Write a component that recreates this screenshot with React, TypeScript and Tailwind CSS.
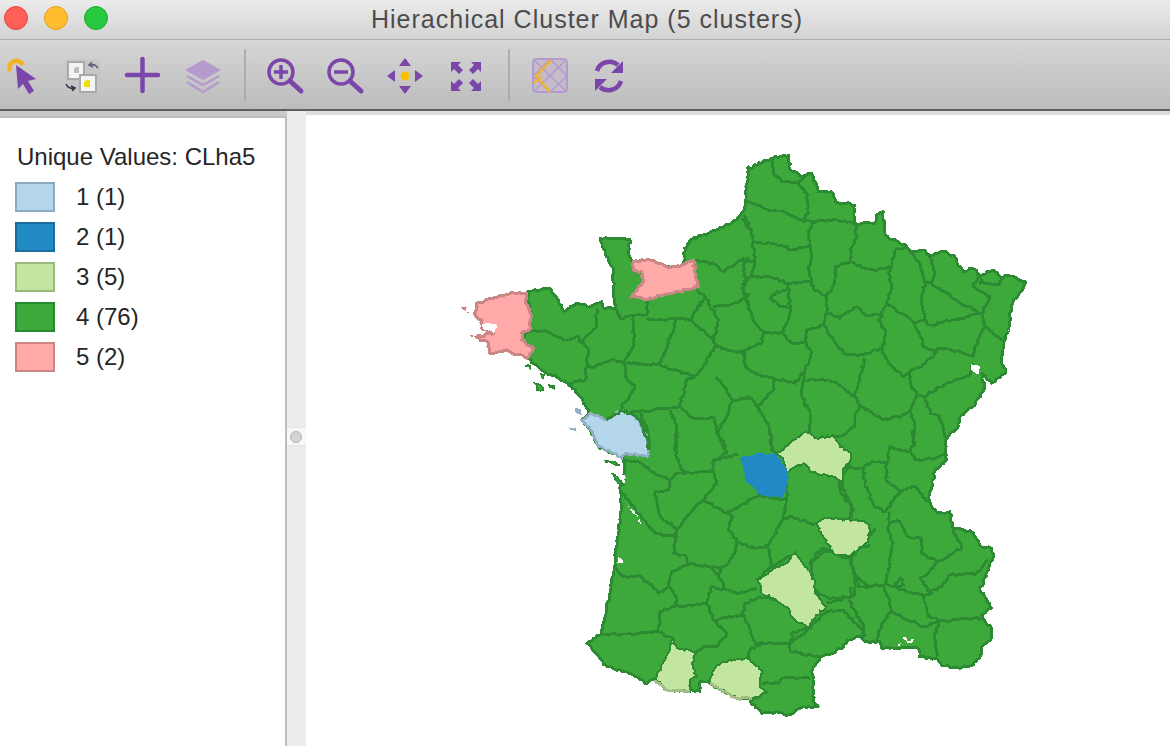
import React from 'react';

type Pt = [number, number];

const PURPLE = '#7b46a9';
const FADED = '#b59bcd';
const GREEN = '#3ca93a';
const GREEN_LINE = '#2b8a32';

// Shapes were traced from crops of the map, so each set keeps the crop origin
const parse = (ox: number, oy: number, s: string): Pt[] =>
  s.trim().split(/\s+/).map((p) => {
    const [x, y] = p.split(',').map(Number);
    return [ox + x / 3, oy + y / 3] as Pt;
  });

// Small seeded jitter so the borders look like rasterised boundary data
const rough = (pts: Pt[], closed = false): string => {
  let seed = Math.round(pts[0][0] * 7 + pts[0][1] * 13) + pts.length;
  const rnd = () => {
    seed = (seed * 16807) % 2147483647;
    return (seed % 1000) / 1000 - 0.5;
  };
  const list = closed ? [...pts, pts[0]] : pts;
  let d = `M${list[0][0].toFixed(1)} ${list[0][1].toFixed(1)}`;
  for (let i = 1; i < list.length; i++) {
    const [ax, ay] = list[i - 1];
    const [bx, by] = list[i];
    const steps = Math.max(1, Math.round(Math.hypot(bx - ax, by - ay) / 2.5));
    for (let k = 1; k <= steps; k++) {
      const t = k / steps;
      const j = k === steps ? 0 : 2.4;
      const x = ax + (bx - ax) * t + rnd() * j;
      const y = ay + (by - ay) * t + rnd() * j;
      d += `L${x.toFixed(1)} ${y.toFixed(1)}`;
    }
  }
  return closed ? d + 'Z' : d;
};

const outline: Pt[] = [
  ...parse(740, 150, '22,55 95,25 145,15 150,60 185,80 215,70 235,125 275,125 285,155 345,165 345,220 405,220 410,195 430,185 435,255 500,290 510,305 550,300 570,315 610,305 640,315 670,365 700,355 720,375 760,360 780,380 820,378 858,397 815,465 808,520 790,590 785,640 798,665 755,700 725,670 735,715 700,770 660,800 655,830 615,870'),
  ...parse(800, 430, '440,90 405,125 385,215 415,250 450,245 458,295 515,305 545,350 575,355 582,380 565,420 540,480 575,535 545,555 575,595 575,625 545,650 545,670 520,705 480,715 430,708 405,685 358,680 355,655 245,655 240,635 195,635 180,620 150,630 100,670 65,680 38,720'),
  ...parse(570, 430, '730,810 745,830 700,830 655,855 620,845 575,850 540,815 570,800 495,800 420,760 390,755 390,785 360,780 290,780 255,750 225,760 190,735 100,705 95,690 50,640 95,610 125,460 135,400 155,235 150,180 165,100 160,85 130,70 85,50 60,0'),
  ...parse(450, 150, '395,810 420,790 395,745 355,700 275,660 230,620 215,570 240,540 240,480 232,425 300,415 345,485 380,460 420,470 455,455 460,475 495,475 490,430 490,355 465,310 450,265 540,268 535,305 550,335 600,330 650,350 690,350 705,325 700,310 720,270 800,240 860,210 885,175 895,50'),
];

const borders: Pt[][] = [
  ...[
    '240,545 290,545 340,570 385,560 395,580',
    '440,475 440,530 395,575 415,600 410,650 405,690 350,700',
    '495,475 510,505 550,495 590,495 590,450',
    '550,495 550,590 525,630 525,680 555,715 515,770 530,790 650,775 690,770',
    '590,510 640,510 680,505 720,510 765,440 740,420',
    '765,440 805,510 790,570 795,590 760,650 735,680 640,650 630,645 570,640 520,640 495,630 410,655',
    '680,505 640,620 630,645',
    '720,510 790,570',
    '735,680 710,690 690,770 730,805 795,805 800,850 830,890',
    '795,590 880,610 885,650 900,660',
    '790,470 860,460 900,430',
    '735,330 800,345 820,365 880,325 900,330',
    '880,325 885,400 880,430 900,470',
    '875,205 900,240',
    '660,780 680,830 680,900',
    '570,790 590,830 600,900',
    '800,680 830,720 850,750 900,740',
    '850,750 830,800 800,850',
  ].map((s) => parse(450, 150, s)),
  ...[
    '95,25 100,70 125,95 175,100 205,70',
    '175,105 200,130 205,190 190,210',
    '18,150 85,180 130,185 190,215 220,215 290,210 345,220',
    '10,195 35,240 40,275 125,285 155,300 210,285 205,250 220,215',
    '40,275 45,345 35,375 5,405',
    '0,330 45,340',
    '210,285 215,320 205,360 215,395 145,400 85,380 35,380',
    '215,395 220,415 260,440 285,400 285,350 330,335 335,290 350,265 345,220',
    '330,335 375,355 400,360 455,350 465,300 500,290',
    '455,350 445,370 455,415 440,460 520,515 555,510 545,440 555,400 540,340 510,310',
    '260,440 260,485 300,505 350,470 375,495 420,495 440,465',
    '260,485 250,525 200,540 195,575 155,580 130,550 70,550 40,510 15,430 5,410',
    '145,400 150,480 130,545',
    '145,420 110,425 90,445 120,470 150,470',
    '250,525 280,570 320,615 370,615 420,595 435,580 435,540 415,510 430,495',
    '520,515 545,565 550,590 590,605 545,650 510,665 490,680 455,650 420,595',
    '550,510 575,525 640,510 725,490 735,530 705,590 700,620 660,605 600,595 585,605',
    '575,400 620,430 660,460 725,490 750,440 700,410 720,375',
    '570,315 585,370 575,395 555,400',
    '725,385 720,400 780,405 785,380',
    '735,530 790,570',
    '510,665 510,700 530,735 510,780 495,795 430,810 365,770 345,740 375,625',
    '345,740 310,715 270,690 190,690 195,660 215,610 195,575',
    '195,660 165,700 100,685 45,670 15,650 15,600 65,580 70,550',
    '530,735 555,740 620,700 690,675 700,640',
    '555,740 570,790 600,800 620,870',
    '510,780 525,830 520,890',
    '190,695 185,735 210,790 210,850',
    '360,770 345,790 345,830 300,860 285,855',
    '100,685 100,720 50,770 85,820 95,890',
    '0,750 35,745 50,770',
    '15,600 0,610',
  ].map((s) => parse(740, 150, s)),
  ...[
    '155,85 215,100 245,125 300,150 320,130 430,125 440,155 400,210 340,270 320,300 315,320',
    '320,0 315,60 340,130',
    '230,0 235,80',
    '300,150 295,180 255,185 270,260 320,295',
    '150,180 215,265 255,310 320,320 310,370 350,380 355,405 305,425 295,470 265,490 215,440 160,440 130,405',
    '430,125 430,90 505,75',
    '440,0 470,70 430,95',
    '600,10 605,60 620,70',
    '400,210 470,250 570,195 650,210',
    '470,250 490,260 475,295 500,335 495,370 460,410 420,410 355,400',
    '500,335 555,355 595,345 640,265 650,210 650,130',
    '595,345 605,410 560,450',
    '640,265 660,260 735,285',
    '840,100 810,155 850,240 845,265',
    '460,410 445,435 470,480 500,490 560,475',
    '420,410 445,435',
    '295,470 320,500 315,530 270,545 265,605 140,615 90,610',
    '315,530 410,520 425,470 470,480',
    '410,520 430,570 470,610 440,650 400,650 375,670',
    '265,605 295,620 310,625 300,660',
    '430,570 520,555 555,640 580,640 540,660 535,685',
    '520,555 525,520 570,500 625,510',
    '555,640 660,640 725,590',
    '660,640 665,610 720,590 770,545 820,540 880,605 875,630',
    '660,640 660,665 750,680',
    '575,760 625,760 635,745 720,745',
    '605,410 660,380',
    '720,400 755,355 790,370 835,365 850,430 855,460 850,500 770,520',
    '835,365 900,345',
    '850,430 900,470',
  ].map((s) => parse(570, 430, s)),
  ...[
    '120,110 120,180 155,235 150,270',
    '225,295 150,385 175,470 250,465 270,515 275,545 245,580 230,630',
    '120,110 190,115 215,95 260,100 270,50 330,65 350,90 405,85 440,70',
    '190,115 195,160 220,225 255,245 300,185 260,155 260,100',
    '300,185 345,170 385,215',
    '265,245 265,300 280,340 265,420 255,460 340,490 370,495 425,470 450,435 530,430 565,390',
    '265,275 300,275 325,320 365,325 365,370 410,395 485,355 460,300',
    '410,395 385,430 360,445 395,490 370,500 385,560 440,575 500,565 545,565',
    '270,540 320,570 380,590 415,575 405,620 410,680',
    '335,0 345,40 330,65',
    '150,470 155,500 85,505 45,480 30,400 85,355',
    '150,385 100,370',
    '145,510 190,585 195,620',
    '285,470 300,445 310,465 285,470',
  ].map((s) => parse(800, 430, s)),
];

const lightRegions = [
  '620,75 660,40 705,5 740,25 790,15 810,50 843,70 840,95 820,115 818,155 770,135 720,125 700,100 650,125 640,85',
  '738,280 770,265 880,272 900,285 895,335 835,380 790,370 760,320',
  '565,450 610,415 650,400 675,365 705,410 735,450 735,490 770,530 725,570 720,590 680,575 650,530 610,505 575,490',
  '305,625 320,655 380,665 365,700 380,740 360,750 360,785 290,780 255,745 285,690 300,660',
  '420,745 440,705 480,690 530,685 575,720 570,770 595,785 545,805 500,805 420,760',
].map((s) => parse(570, 430, s));

const pinkRegions = [
  '230,430 180,430 125,445 80,460 75,495 95,510 95,535 135,548 80,560 115,580 120,610 170,600 230,625 250,595 215,570 215,550 240,540 240,480 228,460',
  '550,335 600,330 650,350 690,350 730,330 745,410 640,435 590,450 545,440 580,395 575,365 550,360',
].map((s) => parse(450, 150, s));

const paleBlue: Pt[] = [
  ...parse(450, 150, '395,810 420,790 470,810 515,780 560,800 590,860 597,900'),
  ...parse(570, 430, '232,80 170,70 155,85 130,70 85,50 60,0'),
];
const paleBlueInland = parse(450, 150, '470,810 515,780 560,800 590,860 597,900');
const darkBlue = parse(570, 430, '507,85 570,70 620,75 655,125 655,160 635,205 575,195 525,150 520,120');

const coastLight = [
  '255,750 290,780 360,785',
  '420,760 500,805 545,805',
].map((s) => parse(570, 430, s));

const greenIslands = [
  '105,92 125,95 150,105 125,100',
  '125,130 140,135 160,165 145,160',
].map((s) => parse(570, 430, s));
const greenIslets = [
  '225,648 240,648 240,655',
  '255,700 272,705 280,720 260,720',
  '295,702 312,708 312,716 300,712',
  '273,672 282,675 280,685',
].map((s) => parse(450, 150, s));
const pinkIslets = [
  '33,472 50,472 47,482',
  '57,555 70,555 68,560',
  '50,485 56,485 55,495',
].map((s) => parse(450, 150, s));
const blueIslets = [
  '375,775 392,778 395,795 380,790',
  '358,832 378,835 378,842 362,840',
].map((s) => parse(450, 150, s));

const holes = [
  parse(450, 150, '95,520 140,525 135,547 100,535'),
  ...['172,225 195,245 212,285 205,262 185,245', '145,382 160,392 158,400 140,398', '128,128 165,135 162,162 150,140'].map((s) => parse(570, 430, s)),
  parse(740, 150, '692,640 720,650 718,672 695,660'),
  ...['310,622 322,625 322,630 310,628', '322,632 342,628 335,640 322,640', '292,642 302,640 298,650'].map((s) => parse(800, 430, s)),
];

const FranceMap: React.FC = () => (
  <svg viewBox="306 115 864 631" shapeRendering="crispEdges" className="block w-[864px] h-[631px]">
    <path d={rough(outline, true)} fill={GREEN} stroke={GREEN_LINE} strokeWidth={2.8} strokeLinejoin="round" />
    {borders.map((pts, i) => (
      <path key={i} d={rough(pts)} fill="none" stroke={GREEN_LINE} strokeWidth={2.8} strokeLinejoin="round" />
    ))}
    {lightRegions.map((pts, i) => (
      <path key={i} d={rough(pts, true)} fill="#c2e5a0" stroke={GREEN_LINE} strokeWidth={2} />
    ))}
    {coastLight.map((pts, i) => (
      <path key={i} d={rough(pts)} fill="none" stroke="#a3bd84" strokeWidth={2.8} />
    ))}
    {pinkRegions.map((pts, i) => (
      <path key={i} d={rough(pts, true)} fill="#ffa9a9" stroke="#cb8686" strokeWidth={3} />
    ))}
    <path d={rough(paleBlue, true)} fill="#b3d6ea" stroke="#92b0c4" strokeWidth={2.6} />
    <path d={rough(paleBlueInland)} fill="none" stroke={GREEN_LINE} strokeWidth={2.8} />
    <path d={rough(darkBlue, true)} fill="#2189c3" />
    {greenIslands.concat(greenIslets).map((pts, i) => (
      <path key={i} d={rough(pts, true)} fill={GREEN} stroke={GREEN_LINE} strokeWidth={1.5} />
    ))}
    {pinkIslets.map((pts, i) => (
      <path key={i} d={rough(pts, true)} fill="#cb8686" />
    ))}
    {blueIslets.map((pts, i) => (
      <path key={i} d={rough(pts, true)} fill="#92b0c4" />
    ))}
    {holes.map((pts, i) => (
      <path key={i} d={rough(pts, true)} fill="#ffffff" />
    ))}
  </svg>
);

// Toolbar icons use window coordinates: x from the left edge, y from the top
const ToolIcon: React.FC<{ x: number; w: number; children: React.ReactNode }> = ({ x, w, children }) => (
  <svg viewBox={`${x} 40 ${w} 69`} className="block h-[69px] shrink-0" style={{ width: w }}>
    {children}
  </svg>
);

const ToolbarSeparator = () => <div className="w-[2px] h-[52px] bg-[#adadad] shrink-0" />;

const Toolbar: React.FC = () => (
  <div className="h-[69px] shrink-0 flex items-center bg-gradient-to-b from-[#d6d6d6] to-[#bcbcbc]">
    <ToolIcon x={0} w={52}>
      <path d="M10 71 a7 7 0 0 1 13 -6" fill="none" stroke="#f5b21f" strokeWidth={4.5} />
      <path d="M16 65 L36 79 L28 81 L34 91 L29 94 L23 84 L18 89 Z" fill={PURPLE} />
    </ToolIcon>
    <ToolIcon x={52} w={60}>
      <rect x={65} y={59} width={36} height={35} fill="#c4c4c4" opacity={0.6} />
      <rect x={68} y={62} width={16} height={17} fill="#f4f4f4" stroke="#a9a9a9" strokeWidth={2} />
      <path d="M74 73 h5 v-6 h-2 a3 3 0 0 0 -3 3 Z" fill="#bdbdbd" />
      <rect x={80} y={75} width={16} height={17} fill="#f4f4f4" stroke="#a9a9a9" strokeWidth={2} />
      <path d="M84 87 h6 v-7 h-3 a4 4 0 0 0 -3 4 Z" fill="#f0e000" />
      <path d="M98 68 a7 7 0 0 0 -8 -3 M92 62 l-3 3 l4 2" fill="none" stroke="#6c5a80" strokeWidth={1.6} />
      <path d="M66 84 a7 7 0 0 0 9 4 M72 91 l3 -3 l-4 -2" fill="none" stroke="#3c3148" strokeWidth={1.6} />
    </ToolIcon>
    <ToolIcon x={112} w={60}>
      <path d="M127 75 H158 M142.5 59 V91" stroke={PURPLE} strokeWidth={4.5} strokeLinecap="round" />
    </ToolIcon>
    <ToolIcon x={172} w={60}>
      <path d="M203 60 L221 70 L203 80 L185 70 Z" fill={FADED} />
      <path d="M187 76 L203 85 L219 76" fill="none" stroke={FADED} strokeWidth={2.5} />
      <path d="M187 82 L203 92 L219 82" fill="none" stroke={FADED} strokeWidth={2.5} />
    </ToolIcon>
    <div className="w-[12px] shrink-0" />
    <ToolbarSeparator />
    <div className="w-[8px] shrink-0" />
    <ToolIcon x={255} w={60}>
      <circle cx={282} cy={72} r={12} fill="none" stroke={PURPLE} strokeWidth={3.5} />
      <path d="M275 72 H289 M282 65 V79" stroke={PURPLE} strokeWidth={3.5} />
      <path d="M291 81 L302 91" stroke={PURPLE} strokeWidth={5} strokeLinecap="round" />
    </ToolIcon>
    <ToolIcon x={315} w={60}>
      <circle cx={342} cy={72} r={12} fill="none" stroke={PURPLE} strokeWidth={3.5} />
      <path d="M335 72 H349" stroke={PURPLE} strokeWidth={3.5} />
      <path d="M351 81 L362 91" stroke={PURPLE} strokeWidth={5} strokeLinecap="round" />
    </ToolIcon>
    <ToolIcon x={375} w={60}>
      <circle cx={406} cy={76} r={4.5} fill="#f8c000" />
      <path d="M406 58 L412 66 H400 Z M406 94 L412 86 H400 Z M388 76 L396 70 V82 Z M424 76 L416 70 V82 Z" fill={PURPLE} />
    </ToolIcon>
    <ToolIcon x={435} w={64}>
      <path d="M452 62 H462 L459 65 L464 70 L460 74 L455 69 L452 72 Z" fill={PURPLE} />
      <path d="M482 62 H472 L475 65 L470 70 L474 74 L479 69 L482 72 Z" fill={PURPLE} />
      <path d="M452 91 H462 L459 88 L464 83 L460 79 L455 84 L452 81 Z" fill={PURPLE} />
      <path d="M482 91 H472 L475 88 L470 83 L474 79 L479 84 L482 81 Z" fill={PURPLE} />
    </ToolIcon>
    <div className="w-[10px] shrink-0" />
    <ToolbarSeparator />
    <div className="w-[9px] shrink-0" />
    <ToolIcon x={520} w={60}>
      <rect x={534} y={59} width={34} height={33} rx={4} fill="#c4bcc9" stroke={FADED} strokeWidth={2} />
      <path d="M534 59 L568 92 M568 59 L534 92 M551 59 L568 76 L551 92 L534 76 Z" fill="none" stroke={FADED} strokeWidth={1.5} />
      <path d="M552 60 L537 76 L551 92" fill="none" stroke="#f2b32a" strokeWidth={2.5} />
      <path d="M534 84 L543 76" stroke="#f2b32a" strokeWidth={2} />
    </ToolIcon>
    <ToolIcon x={580} w={60}>
      <path d="M598 71 a13 13 0 0 1 21 -6" fill="none" stroke={PURPLE} strokeWidth={4.5} />
      <path d="M624 61 V73 H612 Z" fill={PURPLE} />
      <path d="M622 81 a13 13 0 0 1 -21 6" fill="none" stroke={PURPLE} strokeWidth={4.5} />
      <path d="M596 91 V79 H608 Z" fill={PURPLE} />
    </ToolIcon>
  </div>
);

const legend = [
  { label: '1 (1)', swatch: 'bg-[#b3d6ea] border-[#8aabbf]' },
  { label: '2 (1)', swatch: 'bg-[#2189c3] border-[#196d9f]' },
  { label: '3 (5)', swatch: 'bg-[#c2e5a0] border-[#99b97f]' },
  { label: '4 (76)', swatch: 'bg-[#3ca93a] border-[#2a8a31]' },
  { label: '5 (2)', swatch: 'bg-[#ffa9a9] border-[#cb8686]' },
];

const App: React.FC = () => (
  <div className="w-[1170px] h-[746px] flex flex-col overflow-hidden bg-white font-['Liberation_Sans',Arial,sans-serif]">
    {/* Title bar */}
    <div className="h-[39px] shrink-0 flex items-center relative bg-gradient-to-b from-[#ebebeb] to-[#d3d3d3]">
      <div className="absolute left-[4px] top-[6px] flex gap-[16px]">
        <div className="w-[24px] h-[24px] rounded-full bg-[#ff5f57] border border-[#e2463f]" />
        <div className="w-[24px] h-[24px] rounded-full bg-[#febc2e] border border-[#e1a116]" />
        <div className="w-[24px] h-[24px] rounded-full bg-[#28c840] border border-[#1aab29]" />
      </div>
      <div className="w-full text-center pl-[4px] text-[25px] leading-none tracking-[1px] text-[#4c4c4c]">
        Hierachical Cluster Map (5 clusters)
      </div>
    </div>
    <div className="h-px shrink-0 bg-[#adadad]" />
    <Toolbar />
    <div className="h-[2px] shrink-0 bg-[#5f5f5f]" />

    {/* Body */}
    <div className="flex-1 min-h-0 flex">
      <div className="w-[287px] shrink-0 flex flex-col">
        <div className="h-[5px] shrink-0 bg-[#c9c9c9]" />
        {/* Legend */}
        <div className="flex-1 min-h-0 bg-white border-t-2 border-r-2 border-[#bdbdbd] pl-[15px] pt-[26px]">
          <div className="pl-[2px] text-[24px] leading-[26px] text-[#262626]">Unique Values: CLha5</div>
          <div className="mt-[12px] flex flex-col gap-[10px]">
            {legend.map((item) => (
              <div key={item.label} className="h-[30px] flex items-center">
                <div className={`w-[40px] h-[30px] border-2 ${item.swatch}`} />
                <span className="ml-[21px] text-[24px] leading-none text-[#262626]">{item.label}</span>
              </div>
            ))}
          </div>
        </div>
      </div>
      {/* Sash */}
      <div className="w-[19px] shrink-0 bg-[#ececec] pt-[316px]">
        <div className="h-[19px] bg-[#f7f7f7] border-y border-[#e2e2e2] flex items-center pl-[3px]">
          <div className="w-[12px] h-[12px] rounded-full bg-[#d2d2d2] border border-[#b5b5b5]" />
        </div>
      </div>
      <div className="flex-1 min-w-0 flex flex-col bg-white">
        <div className="h-[4px] shrink-0 bg-[#dedede]" />
        <FranceMap />
      </div>
    </div>
  </div>
);

export default App;
